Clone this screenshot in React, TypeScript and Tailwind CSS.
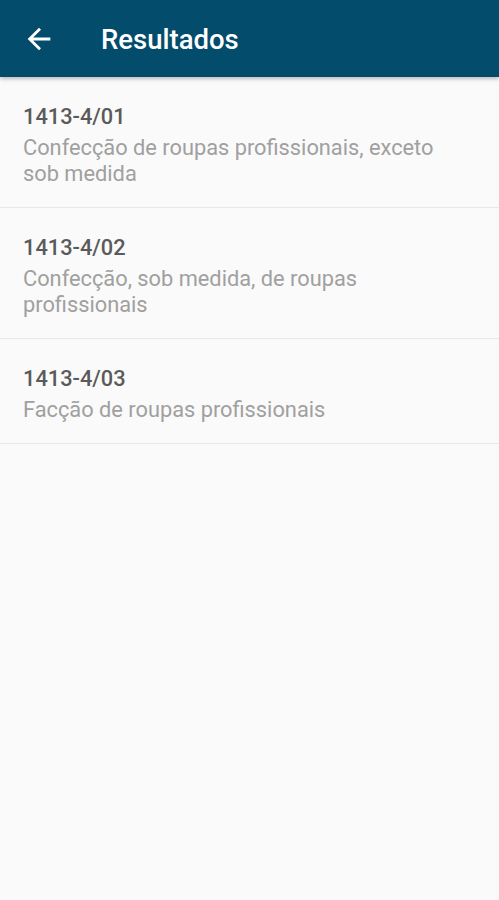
import React from "react";

const items = [
  { code: "1413-4/01", desc: "Confecção de roupas profissionais, exceto sob medida" },
  { code: "1413-4/02", desc: "Confecção, sob medida, de roupas profissionais" },
  { code: "1413-4/03", desc: "Facção de roupas profissionais" },
];

export default function App() {
  return (
    <div className="w-[499px] h-[900px] bg-[#fafafa] overflow-hidden" style={{ fontFamily: "Roboto, 'Noto Sans', sans-serif" }}>
      <div className="relative z-10 h-[77px] bg-[#034c6c] flex items-center shadow-[0_2px_4px_rgba(0,0,0,0.25)]">
        <div className="ml-[22px] w-[34px] h-[34px] flex items-center justify-center">
          <svg width="34" height="34" viewBox="0 0 24 24" fill="white">
            <path d="M20 11H7.83l5.59-5.59L12 4l-8 8 8 8 1.41-1.41L7.83 13H20v-2z" />
          </svg>
        </div>
        <div className="ml-[45px] mt-[2px] text-white text-[27.5px] font-medium leading-none">Resultados</div>
      </div>
      <div>
        {items.map((it) => (
          <div key={it.code} className="pl-[23px] pr-[40px] pt-[27px] pb-[20px] border-b border-[#e8e8e8]">
            <div className="text-[21.8px] leading-[26px] font-medium text-[#5a5a5a]">{it.code}</div>
            <div className="mt-[5px] text-[21.8px] leading-[26px] text-[#a0a0a0]">{it.desc}</div>
          </div>
        ))}
      </div>
    </div>
  );
}
